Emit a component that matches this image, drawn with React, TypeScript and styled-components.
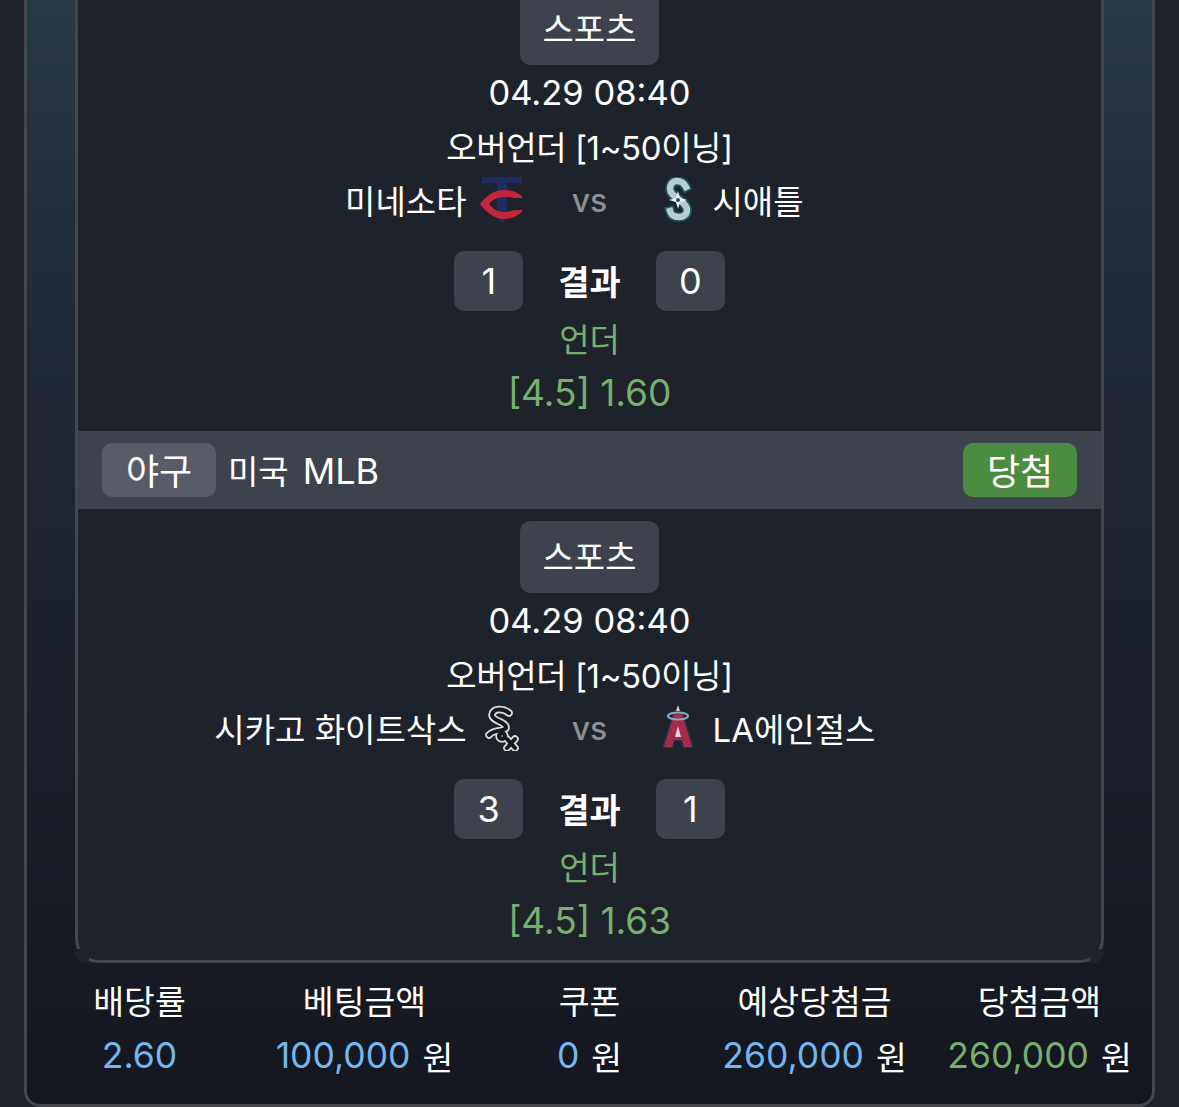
import React from "react";
import styled, { createGlobalStyle } from "styled-components";

const GlobalStyle = createGlobalStyle`
  html, body {
    margin: 0;
    padding: 0;
    height: 1107px;
    overflow: hidden;
    background: #1e222a;
  }
  body {
    font-family: "Inter", "Noto Sans CJK KR", sans-serif;
    color: #ffffff;
  }
`;

const Page = styled.div`
  height: 1107px;
  overflow: hidden;
  padding: 0 24px;
  box-sizing: border-box;
`;

const Slip = styled.div`
  margin-top: -60px;
  height: 1167px;
  box-sizing: border-box;
  border: 3px solid #45474d;
  border-radius: 16px;
  background: linear-gradient(180deg, #2c3a48 0%, #222d3a 25%, #1a1e28 70%, #14171f 100%);
  padding: 0 48px;
`;

const Card = styled.div`
  position: relative;
  border-radius: 0 0 10px 10px;
  background: #1e222a;
  height: 1020px;
  box-sizing: border-box;
  overflow: hidden;
  padding: 38px 3px 0;

  &::after {
    content: "";
    position: absolute;
    inset: 0;
    box-sizing: border-box;
    border: 3px solid #45474d;
    border-top: 0;
    border-radius: 0 0 24px 24px;
    pointer-events: none;
    mask:
      linear-gradient(#000 0 0) top / 100% calc(100% - 14px) no-repeat,
      linear-gradient(#000 0 0) bottom / calc(100% - 28px) 14px no-repeat;
  }
`;

const Match = styled.div`
  display: flex;
  flex-direction: column;
  align-items: center;
`;

const Tag = styled.div`
  width: 139px;
  height: 72px;
  margin-top: 12px;
  padding-bottom: 3px;
  box-sizing: border-box;
  border-radius: 10px;
  background: #3e424d;
  display: flex;
  align-items: center;
  justify-content: center;
  font-size: 34px;
`;

const Line = styled.div<{ $size?: number; $tight?: boolean }>`
  height: 54px;
  display: flex;
  align-items: center;
  justify-content: center;
  font-size: ${(p) => p.$size ?? 33}px;
  letter-spacing: ${(p) => (p.$tight ? "-0.4px" : "0")};
  white-space: nowrap;
`;

const TeamRow = styled.div`
  width: 100%;
  height: 54px;
  display: grid;
  grid-template-columns: 1fr 130px 1fr;
  align-items: center;
  font-size: 33px;
  white-space: nowrap;
`;

const Team = styled.div<{ $away?: boolean }>`
  display: flex;
  align-items: center;
  justify-content: ${(p) => (p.$away ? "flex-start" : "flex-end")};
  gap: 12px;
`;

const Versus = styled.div`
  text-align: center;
  color: #8d8f94;
  font-size: 32px;
  font-weight: 500;
`;

const ScoreRow = styled.div`
  margin-top: 24px;
  display: flex;
  align-items: center;
  gap: 35px;
  font-size: 36px;
`;

const ScoreBox = styled.div`
  width: 69px;
  height: 60px;
  border-radius: 10px;
  background: #3e424d;
  display: flex;
  align-items: center;
  justify-content: center;
`;

const ResultLabel = styled.div`
  font-weight: 700;
  font-size: 34px;
  padding-bottom: 2px;
`;

const Pick = styled(Line)`
  color: #76b06c;
`;

const LeagueBar = styled.div`
  height: 78px;
  margin-top: 12px;
  background: #3e424d;
  display: flex;
  align-items: center;
  padding: 0 24px;
  font-size: 33px;
`;

const SportBadge = styled.div`
  width: 114px;
  height: 54px;
  margin-right: 12px;
  padding-bottom: 3px;
  box-sizing: border-box;
  border-radius: 10px;
  background: #585c68;
  font-size: 36px;
  display: flex;
  align-items: center;
  justify-content: center;
`;

const LeagueName = styled.div`
  display: flex;
  align-items: baseline;
  gap: 14px;
`;

const LeagueCode = styled.span`
  font-size: 36px;
`;

const WinBadge = styled.div`
  margin-left: auto;
  width: 114px;
  height: 54px;
  padding-bottom: 3px;
  box-sizing: border-box;
  border-radius: 10px;
  background: #4c8c40;
  font-size: 36px;
  display: flex;
  align-items: center;
  justify-content: center;
`;

const Summary = styled.div`
  display: grid;
  grid-template-columns: repeat(5, 1fr);
  margin: 11px -48px 0 -48px;
`;

const SummaryCell = styled.div`
  display: flex;
  flex-direction: column;
  align-items: center;
`;

const SummaryLabel = styled.div`
  height: 54px;
  box-sizing: border-box;
  padding-bottom: 4px;
  display: flex;
  align-items: center;
  font-size: 33.5px;
`;

const SummaryValue = styled.div`
  height: 54px;
  display: flex;
  align-items: center;
  gap: 12px;
  font-size: 33.5px;
  white-space: nowrap;
`;

const Amount = styled.span<{ $win?: boolean }>`
  font-size: 35.5px;
  color: ${(p) => (p.$win ? "#76b06c" : "#74b6ee")};
`;

const TwinsLogo = () => (
  <svg width="46" height="46" viewBox="0 0 46 46">
    <path d="M3 0h40v7h-3l-2-1H28v35l-5 5-5-5V6H8L6 7H3z" fill="#1c2e60" />
    <path
      d="M44 21C40 15 32 13 25 13 15 13 7 19 1 27 7 35 15 42 25 42 32 42 40 39 44 33H35C32 34 29 35 25 35 19 35 14 32 10 27 14 22 19 20 25 20 29 20 32 20 35 21z"
      fill="#c4253a"
    />
  </svg>
);

const marinersCurve =
  "M31 10C29 6 26 4 22 4 17 4 15 8 15 12 15 20 32 24 32 33 32 38 28 40 24 40 19 40 16 38 15 34";

const MarinersLogo = () => (
  <svg width="46" height="46" viewBox="0 0 46 46">
    <g fill="none" strokeLinecap="square">
      <path d={marinersCurve} stroke="#17535a" strokeWidth="10" />
      <path d={marinersCurve} stroke="#b7cccf" strokeWidth="6.5" />
    </g>
    <path d="M23 14l2 7 7 2-7 2-2 7-2-7-7-2 7-2z" fill="#f2f6f7" />
    <circle cx="23" cy="23" r="2" fill="#17535a" />
  </svg>
);

const soxStrokes = (
  <>
    <path d="M30 8C24 3 14 3 13 10 13 16 28 17 27 23 25 27 15 24 10 30" />
    <circle cx="23" cy="31" r="3" />
    <path d="M28 34L36 43M36 34L28 43" />
  </>
);

const SoxLogo = () => (
  <svg width="46" height="46" viewBox="0 0 46 46">
    <g fill="none" strokeLinecap="round" strokeLinejoin="round">
      <g stroke="#dcdcdc" strokeWidth="7.5">{soxStrokes}</g>
      <g stroke="#16181d" strokeWidth="4">{soxStrokes}</g>
    </g>
  </svg>
);

const AngelsLogo = () => (
  <svg width="46" height="46" viewBox="0 0 46 46">
    <path d="M23 0l2 6h-4z" fill="#c4cfd9" />
    <path d="M18 8h10l11 35H28l-2-7h-6l-2 7H7z" fill="#22345c" />
    <path d="M19 9h8l10 33H29l-2-7h-8l-2 7H9z" fill="#a82a48" />
    <path d="M23 21l-3 11h6z" fill="#d9dae2" />
    <ellipse cx="23" cy="11" rx="10" ry="3.6" fill="none" stroke="#86a8c6" strokeWidth="2" />
  </svg>
);

interface MatchData {
  home: string;
  away: string;
  homeLogo: React.ReactNode;
  awayLogo: React.ReactNode;
  homeScore: number;
  awayScore: number;
  odds: string;
}

const matches: MatchData[] = [
  {
    home: "미네소타",
    away: "시애틀",
    homeLogo: <TwinsLogo />,
    awayLogo: <MarinersLogo />,
    homeScore: 1,
    awayScore: 0,
    odds: "[4.5] 1.60",
  },
  {
    home: "시카고 화이트삭스",
    away: "LA에인절스",
    homeLogo: <SoxLogo />,
    awayLogo: <AngelsLogo />,
    homeScore: 3,
    awayScore: 1,
    odds: "[4.5] 1.63",
  },
];

function MatchBlock({ match }: { match: MatchData }) {
  return (
    <Match>
      <Tag>스포츠</Tag>
      <Line $size={34.5}>04.29 08:40</Line>
      <Line $tight>오버언더 [1~50이닝]</Line>
      <TeamRow>
        <Team>
          {match.home}
          {match.homeLogo}
        </Team>
        <Versus>vs</Versus>
        <Team $away>
          {match.awayLogo}
          {match.away}
        </Team>
      </TeamRow>
      <ScoreRow>
        <ScoreBox>{match.homeScore}</ScoreBox>
        <ResultLabel>결과</ResultLabel>
        <ScoreBox>{match.awayScore}</ScoreBox>
      </ScoreRow>
      <Pick>언더</Pick>
      <Pick $size={37}>{match.odds}</Pick>
    </Match>
  );
}

export default function App() {
  return (
    <Page>
      <GlobalStyle />
      <Slip>
        <Card>
          <MatchBlock match={matches[0]} />
          <LeagueBar>
            <SportBadge>야구</SportBadge>
            <LeagueName>
              미국
              <LeagueCode>MLB</LeagueCode>
            </LeagueName>
            <WinBadge>당첨</WinBadge>
          </LeagueBar>
          <MatchBlock match={matches[1]} />
        </Card>
        <Summary>
          <SummaryCell>
            <SummaryLabel>배당률</SummaryLabel>
            <SummaryValue>
              <Amount>2.60</Amount>
            </SummaryValue>
          </SummaryCell>
          <SummaryCell>
            <SummaryLabel>베팅금액</SummaryLabel>
            <SummaryValue>
              <Amount>100,000</Amount> 원
            </SummaryValue>
          </SummaryCell>
          <SummaryCell>
            <SummaryLabel>쿠폰</SummaryLabel>
            <SummaryValue>
              <Amount>0</Amount> 원
            </SummaryValue>
          </SummaryCell>
          <SummaryCell>
            <SummaryLabel>예상당첨금</SummaryLabel>
            <SummaryValue>
              <Amount>260,000</Amount> 원
            </SummaryValue>
          </SummaryCell>
          <SummaryCell>
            <SummaryLabel>당첨금액</SummaryLabel>
            <SummaryValue>
              <Amount $win>260,000</Amount> 원
            </SummaryValue>
          </SummaryCell>
        </Summary>
      </Slip>
    </Page>
  );
}
